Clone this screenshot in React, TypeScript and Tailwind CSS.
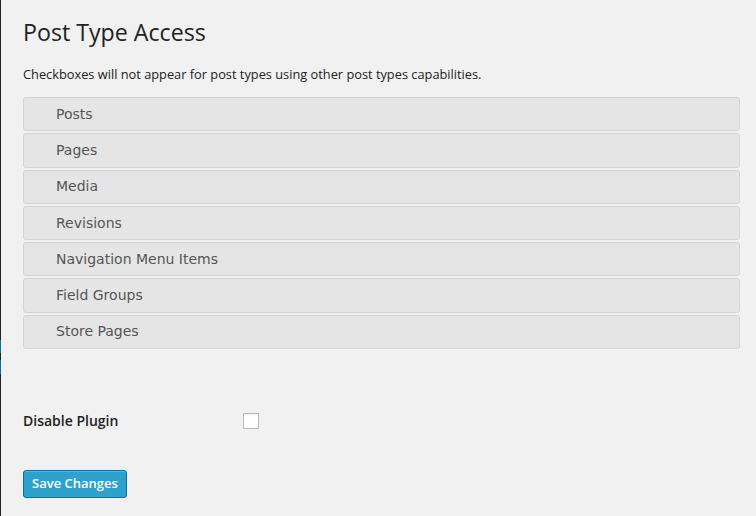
import React from 'react'

const postTypes = [
  'Posts',
  'Pages',
  'Media',
  'Revisions',
  'Navigation Menu Items',
  'Field Groups',
  'Store Pages',
]

export default function App() {
  return (
    <div className="flex min-h-[516px] w-[756px] bg-[#f1f1f1] font-['Open_Sans',sans-serif] text-[#222]">
      <div className="flex w-px shrink-0 flex-col bg-[#222]">
        <div className="h-[340px]" />
        <div className="h-[13px] bg-[#0074a2]" />
        <div className="h-[7px]" />
        <div className="h-[14px] bg-[#0074a2]" />
      </div>
      <div className="flex-1 pl-[22px] pr-[16px]">
        <h2 className="mt-[18px] text-[23.2px] leading-[29px] font-normal">Post Type Access</h2>
        <p className="mt-[19px] text-[12.8px] leading-[16px]">
          Checkboxes will not appear for post types using other post types capabilities.
        </p>
        <div className="mt-[15px] flex flex-col gap-[2px]">
          {postTypes.map((name, i) => (
            <div
              key={i}
              className="flex h-[34.3px] items-center rounded-[3px] border border-[#d4d4d4] bg-[#e5e5e5] pl-[32px] font-['DejaVu_Sans',sans-serif] text-[14px] text-[#555]"
            >
              {name}
            </div>
          ))}
        </div>
        <div className="mt-[61px] flex items-center">
          <span className="w-[220px] text-[14px] font-semibold">Disable Plugin</span>
          <span className="h-4 w-4 border border-[#bbb] bg-white shadow-[inset_0_1px_2px_rgba(0,0,0,0.07)]" />
        </div>
        <button className="mt-[39px] h-[28px] rounded-[3px] border border-[#0074a2] bg-[#2ea2cc] px-[8px] text-[13px] font-semibold text-white shadow-[inset_0_1px_0_rgba(120,200,230,0.5)]">
          Save Changes
        </button>
      </div>
    </div>
  )
}
